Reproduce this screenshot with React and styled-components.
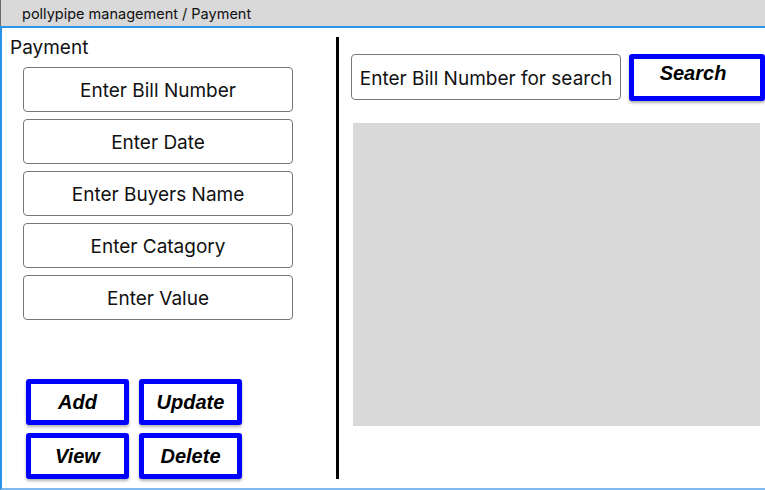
import React from "react";
import styled, { createGlobalStyle } from "styled-components";

const Global = createGlobalStyle`
  html, body { margin: 0; padding: 0; background: #ffffff; }
  body { font-family: Inter, "Noto Sans", sans-serif; overflow: hidden; }
  * { box-sizing: border-box; }
`;

const Page = styled.div`
  width: 765px;
  height: 490px;
  display: flex;
  flex-direction: column;
`;

const TopBar = styled.div`
  height: 26px;
  flex: none;
  background: #d9d9d9;
  border-left: 1px solid #6a6a6a;
  padding-left: 21px;
  display: flex;
  align-items: center;
  font-family: Inter, sans-serif;
  font-size: 14.5px;
  color: #111;
`;

const Frame = styled.div`
  flex: 1;
  display: flex;
  border-top: 2px solid #2a94e8;
  border-left: 2px solid #2a94e8;
  border-bottom: 2px solid #7db9ec;
  min-height: 0;
`;

const LeftPanel = styled.div`
  width: 334px;
  flex: none;
  display: flex;
  flex-direction: column;
  padding: 9px 0 0 8px;
`;

const Title = styled.div`
  font-family: Inter, sans-serif;
  font-size: 19px;
  line-height: 22px;
  color: #111;
`;

const Fields = styled.div`
  display: flex;
  flex-direction: column;
  gap: 7px;
  margin: 8px 0 0 13px;
`;

const Field = styled.div`
  width: 270px;
  height: 45px;
  border: 1px solid #777;
  border-radius: 4px;
  display: flex;
  align-items: center;
  justify-content: center;
  padding-top: 2px;
  font-family: Inter, sans-serif;
  font-size: 19px;
  color: #111;
  background: #fff;
`;

const ButtonGrid = styled.div`
  display: grid;
  grid-template-columns: 103px 103px;
  grid-auto-rows: 46px;
  column-gap: 10px;
  row-gap: 8px;
  margin: 59px 0 0 16px;
`;

const ActionButton = styled.div`
  border: 5px solid #0000ff;
  border-radius: 3px;
  box-shadow: 0 2px 3px rgba(0, 0, 0, 0.3);
  background: #fff;
  display: flex;
  justify-content: center;
  align-items: ${(p) => (p.$top ? "flex-start" : "center")};
  padding-top: ${(p) => (p.$top ? "3px" : "0")};
  padding-right: ${(p) => (p.$top ? "8px" : "0")};
  font-family: "Liberation Sans", Arial, sans-serif;
  font-weight: bold;
  font-style: italic;
  font-size: 20px;
  color: #000;
`;

const Divider = styled.div`
  width: 3px;
  flex: none;
  background: #000;
  margin: 9px 0 9px 0;
`;

const RightPanel = styled.div`
  flex: 1;
  display: flex;
  flex-direction: column;
  padding: 26px 0 0 12px;
`;

const SearchRow = styled.div`
  display: flex;
  gap: 8px;
`;

const SearchField = styled(Field)`
  height: 46px;
`;

const SearchButton = styled(ActionButton)`
  width: 136px;
  height: 47px;
`;

const Results = styled.div`
  width: 407px;
  height: 303px;
  background: #d9d9d9;
  margin: 22px 0 0 2px;
`;

export default function App() {
  const fields = [
    "Enter Bill Number",
    "Enter Date",
    "Enter Buyers Name",
    "Enter Catagory",
    "Enter Value",
  ];
  return (
    <>
      <Global />
      <Page>
        <TopBar>pollypipe management / Payment</TopBar>
        <Frame>
          <LeftPanel>
            <Title>Payment</Title>
            <Fields>
              {fields.map((f) => (
                <Field key={f}>{f}</Field>
              ))}
            </Fields>
            <ButtonGrid>
              <ActionButton>Add</ActionButton>
              <ActionButton>Update</ActionButton>
              <ActionButton>View</ActionButton>
              <ActionButton>Delete</ActionButton>
            </ButtonGrid>
          </LeftPanel>
          <Divider />
          <RightPanel>
            <SearchRow>
              <SearchField>Enter Bill Number for search</SearchField>
              <SearchButton $top>Search</SearchButton>
            </SearchRow>
            <Results />
          </RightPanel>
        </Frame>
      </Page>
    </>
  );
}
